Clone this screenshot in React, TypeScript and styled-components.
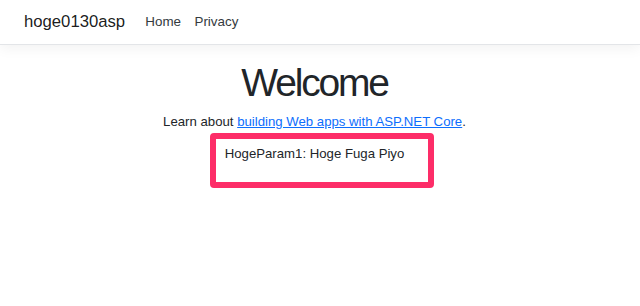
import React from "react";
import styled, { createGlobalStyle } from "styled-components";

const GlobalStyle = createGlobalStyle`
  html, body {
    margin: 0;
    padding: 0;
    background: #ffffff;
  }
  body {
    font-family: "Liberation Sans", Arial, Helvetica, sans-serif;
    font-size: 13.2px;
    line-height: 20px;
    color: #212529;
  }
`;

const Page = styled.div`
  width: 640px;
  min-height: 306px;
  display: flex;
  flex-direction: column;
  overflow: hidden;
`;

const Navbar = styled.nav`
  height: 44px;
  display: flex;
  align-items: center;
  padding: 0 24px;
  background: #ffffff;
  border-bottom: 1px solid #e3e5e8;
  box-shadow: 0 4px 12px rgba(0, 0, 0, 0.05);
`;

const Brand = styled.a`
  font-size: 16.7px;
  line-height: 24px;
  color: rgba(0, 0, 0, 0.9);
  text-decoration: none;
  margin-right: 13.5px;
`;

const NavList = styled.ul`
  display: flex;
  list-style: none;
  margin: 0;
  padding: 0;
`;

const NavLink = styled.a`
  display: block;
  padding: 0 6.7px;
  font-size: 13.4px;
  line-height: 20px;
  color: #343a40;
  text-decoration: none;
`;

const Main = styled.main`
  display: flex;
  flex-direction: column;
  align-items: center;
  padding-right: 11px;
  padding-top: 14px;
`;

const Title = styled.h1`
  margin: 0 0 5px;
  font-size: 39px;
  line-height: 48px;
  font-weight: 400;
  letter-spacing: -2.2px;
  color: #212529;
`;

const Lead = styled.p`
  margin: 0 0 12px;
`;

const Link = styled.a`
  color: #0d6efd;
  text-decoration: underline;
`;

const ParamLine = styled.div`
  position: relative;
`;

const Highlight = styled.span`
  position: absolute;
  left: -15px;
  right: -30px;
  top: -11px;
  bottom: -24px;
  border: 6px solid #fd2d68;
  border-radius: 4px;
  pointer-events: none;
`;

export default function App() {
  return (
    <>
      <GlobalStyle />
      <Page>
        <Navbar>
          <Brand href="#">hoge0130asp</Brand>
          <NavList>
            <li>
              <NavLink href="#">Home</NavLink>
            </li>
            <li>
              <NavLink href="#">Privacy</NavLink>
            </li>
          </NavList>
        </Navbar>
        <Main>
          <Title>Welcome</Title>
          <Lead>
            Learn about <Link href="#">building Web apps with ASP.NET Core</Link>.
          </Lead>
          <ParamLine>
            HogeParam1: Hoge Fuga Piyo
            <Highlight />
          </ParamLine>
        </Main>
      </Page>
    </>
  );
}
